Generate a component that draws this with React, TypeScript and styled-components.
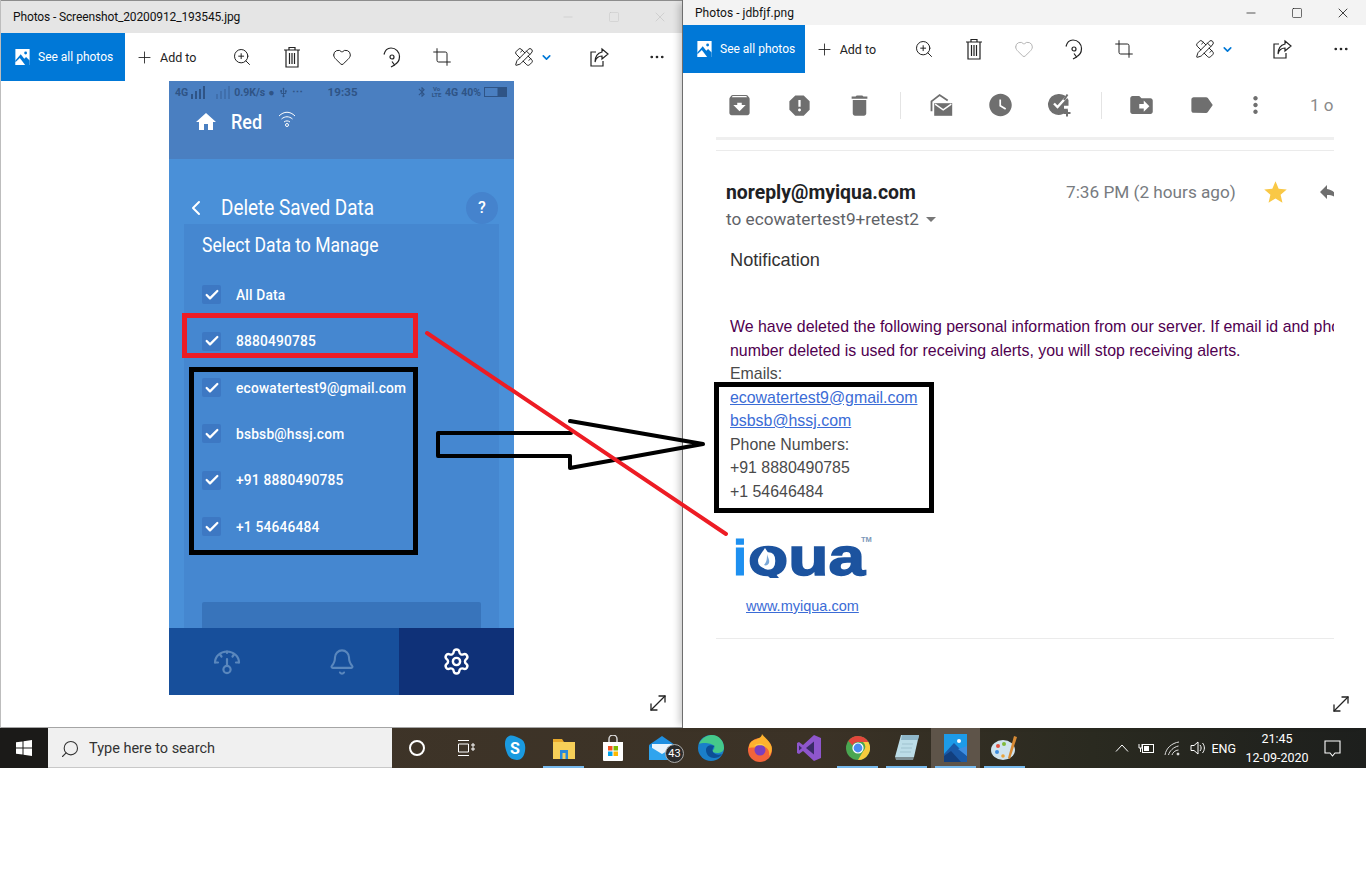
import styled, { createGlobalStyle } from "styled-components";
import type { ReactNode } from "react";
import {
  Bell,
  Check,
  ChevronDown,
  ChevronLeft,
  Crop,
  Ellipsis,
  Heart,
  Minus,
  MoveDiagonal,
  PencilRuler,
  Plus,
  Search,
  Settings,
  Square,
  X,
  ZoomIn,
} from "lucide-react";
import {
  MdArchive,
  MdArrowDropDown,
  MdBluetooth,
  MdDelete,
  MdDriveFileMove,
  MdHome,
  MdLabel,
  MdMoreVert,
  MdReply,
  MdReport,
  MdStar,
  MdUsb,
  MdWatchLater,
} from "react-icons/md";

const GlobalStyle = createGlobalStyle`
  html, body {
    margin: 0;
    background: #fff;
  }
  * {
    box-sizing: border-box;
  }
`;

const Page = styled.div`
  position: relative;
  width: 1366px;
  height: 877px;
  overflow: hidden;
  background: #fff;
  font-family: "Open Sans", "Liberation Sans", sans-serif;
`;

const Desktop = styled.div`
  display: flex;
  height: 728px;
`;

const Window = styled.section<{ $active?: boolean }>`
  height: 728px;
  display: flex;
  flex-direction: column;
  background: #fff;
  position: relative;
  border-bottom: ${(p) => (p.$active ? "none" : "1px solid #a5a5a5")};
  border-left: ${(p) => (p.$active ? "1px solid #6e6e6e" : "1px solid #bdbdbd")};
  margin-left: ${(p) => (p.$active ? "-1px" : "0")};
  width: ${(p) => (p.$active ? "684px" : "683px")};
  box-shadow: ${(p) => (p.$active ? "-6px 0 7px -3px rgba(0,0,0,.2)" : "none")};
`;

const TitleBar = styled.header<{ $active?: boolean }>`
  height: ${(p) => (p.$active ? "25px" : "33px")};
  flex: none;
  display: flex;
  align-items: center;
  background: ${(p) => (p.$active ? "#f3f3f3" : "#e5e5e5")};
  border-top: ${(p) => (p.$active ? "none" : "1px solid #8d8d8d")};
  color: #111;
  font-family: Roboto, sans-serif;
  font-size: 12px;
  padding-left: 12px;
`;

const TitleText = styled.span<{ $tight?: boolean }>`
  flex: 1;
  letter-spacing: ${(p) => (p.$tight ? "-0.13px" : "0.05px")};
`;

const WinButton = styled.span<{ $dim?: boolean }>`
  width: 46px;
  display: flex;
  justify-content: center;
  align-items: center;
  color: ${(p) => (p.$dim ? "#c4c4c4" : "#111")};
`;

const Toolbar = styled.nav`
  height: 48px;
  flex: none;
  display: flex;
  align-items: center;
  background: #fff;
`;

const SeeAll = styled.div<{ $active?: boolean }>`
  width: ${(p) => (p.$active ? "122px" : "124px")};
  height: 48px;
  background: #0078d7;
  color: #fff;
  display: flex;
  align-items: center;
  gap: 8px;
  padding-left: 14px;
  font-family: Roboto, sans-serif;
  font-size: 12px;
`;

const AddTo = styled.div<{ $active?: boolean }>`
  width: ${(p) => (p.$active ? "95px" : "92px")};
  display: flex;
  align-items: center;
  gap: 6px;
  padding-left: 10px;
  color: #222;
  font-family: Roboto, sans-serif;
  font-size: 12.5px;
`;

const ToolButton = styled.span`
  width: 50px;
  display: flex;
  justify-content: center;
  align-items: center;
  color: #222;
`;

const DrawButton = styled.span<{ $active?: boolean }>`
  width: ${(p) => (p.$active ? "76px" : "74px")};
  margin-left: 33px;
  padding-right: ${(p) => (p.$active ? "10px" : "8px")};
  display: flex;
  align-items: center;
  justify-content: center;
  gap: 6px;
  color: #222;
`;

const MoreButton = styled(ToolButton)<{ $active?: boolean }>`
  margin-left: ${(p) => (p.$active ? "9px" : "8px")};
`;

const PhotoArea = styled.div`
  flex: 1;
  padding-left: 168px;
`;

const ExpandMark = styled.span`
  position: absolute;
  right: 13px;
  bottom: 12px;
  color: #222;
  display: flex;
`;

const Phone = styled.div`
  width: 345px;
  height: 614px;
  display: flex;
  flex-direction: column;
  background: #4a90d8;
  color: #fff;
  font-family: Roboto, sans-serif;
`;

const PhoneHeader = styled.div`
  height: 78px;
  flex: none;
  background: #4a7fc1;
`;

const StatusBar = styled.div`
  height: 22px;
  display: flex;
  align-items: center;
  padding: 0 6px 0 6px;
  gap: 3px;
  color: #2f5486;
  font-size: 10.5px;
  font-weight: 700;
`;

const StatusFaded = styled.span`
  display: flex;
  margin-left: 7px;
  opacity: 0.35;
`;

const StatusTime = styled.span`
  margin-left: 22px;
  font-size: 11.5px;
  letter-spacing: 0.1px;
`;

const StatusRight = styled.span`
  margin-left: auto;
  display: flex;
  align-items: center;
  gap: 3px;
`;

const SmallStack = styled.span`
  font-size: 6px;
  line-height: 6px;
  width: 11px;
  text-align: center;
`;

const Bars = styled.svg`
  width: 15px;
  height: 13px;
  display: block;
`;

const AppRow = styled.div`
  display: flex;
  align-items: center;
  padding-left: 25px;
  height: 36px;
  margin-top: 1px;
  font-size: 20px;
  font-weight: 500;
`;

const AppName = styled.span`
  margin-left: 13px;
  transform: scaleX(0.9);
  transform-origin: left center;
`;

const WifiMark = styled.svg`
  width: 18px;
  height: 18px;
  margin: -7px 0 0 12px;
`;

const PhoneBody = styled.div`
  flex: 1;
  min-height: 0;
  display: flex;
  flex-direction: column;
  padding-top: 32px;
  overflow: hidden;
`;

const TitleRow = styled.div`
  height: 33px;
  flex: none;
  display: flex;
  align-items: center;
  padding: 0 16px 0 15px;
  font-size: 21.5px;
`;

const PageTitle = styled.span`
  flex: 1;
  margin-left: 13px;
  transform: scaleX(0.88);
  transform-origin: left center;
`;

const HelpBubble = styled.span`
  width: 32px;
  height: 32px;
  border-radius: 50%;
  background: #4583cd;
  display: flex;
  align-items: center;
  justify-content: center;
  font-size: 16px;
  font-weight: 500;
`;

const DataPanel = styled.div`
  flex: 1;
  margin: 0 15px;
  padding: 0 18px;
  background: #4587d0;
`;

const PanelHeading = styled.h2`
  margin: 0;
  height: 47.6px;
  padding-top: 9px;
  font-size: 19.5px;
  line-height: 26px;
  font-weight: 400;
  transform: scaleX(0.9);
  transform-origin: left center;
`;

const DataRow = styled.div`
  height: 46.4px;
  display: flex;
  align-items: center;
  gap: 15px;
  font-size: 14.8px;
  font-weight: 500;
`;

const DataLabel = styled.span`
  letter-spacing: 0.2px;
  transform: scaleX(0.93);
  transform-origin: left center;
  white-space: nowrap;
`;

const CheckMark = styled.span`
  width: 19px;
  height: 19px;
  flex: none;
  border-radius: 2px;
  background: #3d78c3;
  display: flex;
  align-items: center;
  justify-content: center;
`;

const SaveBlock = styled.div`
  height: 30px;
  margin-top: 52.4px;
  background: #3874bb;
  border-radius: 2px 2px 0 0;
`;

const BottomNav = styled.div`
  height: 67px;
  flex: none;
  display: grid;
  grid-template-columns: repeat(3, 1fr);
  background: #174f9b;
`;

const NavItem = styled.span<{ $on?: boolean }>`
  display: flex;
  align-items: center;
  justify-content: center;
  background: ${(p) => (p.$on ? "#0f3178" : "transparent")};
  color: ${(p) => (p.$on ? "#fff" : "#5a87bd")};
`;

const MailArea = styled.div`
  flex: 1;
  margin: 0 32px 0 33px;
  overflow: hidden;
  min-height: 0;
`;

const MailTools = styled.div`
  height: 64px;
  display: flex;
  align-items: center;
  padding-left: 10px;
  color: #6f6f6f;
  gap: 33px;
`;

const MailSep = styled.span`
  width: 1px;
  height: 27px;
  flex: none;
  background: #e4e4e4;
  margin: 0 -6.5px;
`;

const MailIcon = styled.span`
  width: 27px;
  height: 27px;
  flex: none;
  display: flex;
  align-items: center;
  justify-content: center;
`;

const MenuIcon = styled(MailIcon)`
  margin-left: -6px;
`;

const PageCount = styled.span`
  flex: none;
  margin-left: 8px;
  color: #8a8a8a;
  font-family: Roboto, sans-serif;
  font-size: 17px;
  white-space: nowrap;
`;

const Rule = styled.div<{ $thick?: boolean }>`
  height: ${(p) => (p.$thick ? "3px" : "1px")};
  margin-bottom: ${(p) => (p.$thick ? "10px" : "0")};
  background: ${(p) => (p.$thick ? "#efefef" : "#ebebeb")};
`;

const SenderRow = styled.div`
  height: 24px;
  margin: 29px 0 0 10px;
  display: flex;
  align-items: center;
  font-family: Roboto, sans-serif;
  white-space: nowrap;
`;

const Sender = styled.strong`
  width: 340px;
  flex: none;
  font-size: 19.4px;
  font-weight: 700;
  color: #202124;
`;

const SentTime = styled.span`
  width: 196px;
  flex: none;
  font-size: 17.2px;
  color: #777b80;
`;

const StarMark = styled.span`
  display: flex;
  flex: none;
  color: #f9c846;
  margin-right: 28px;
`;

const ReplyMark = styled.span`
  display: flex;
  flex: none;
  color: #6f6f6f;
`;

const ToRow = styled.div`
  height: 20px;
  margin: 5px 0 0 10px;
  display: flex;
  align-items: center;
  color: #5f6368;
  font-family: Roboto, sans-serif;
  font-size: 17.2px;
`;

const MailBody = styled.div`
  margin-left: 14px;
  font-family: "Liberation Sans", Arial, sans-serif;
  font-size: 15.9px;
  line-height: 23.5px;
  color: #4a4a4a;
`;

const Notice = styled.div`
  margin-top: 19px;
  height: 24px;
  font-size: 18.2px;
  line-height: 24px;
  color: #333;
`;

const Deleted = styled.p`
  margin: 43px 0 0;
  color: #500050;
  white-space: nowrap;
`;

const MailLink = styled.a`
  display: block;
  color: #3b6cd6;
  text-decoration: underline;
`;

const LogoBox = styled.svg`
  display: block;
  width: 145px;
  height: 46px;
  margin: 30px 0 0 1px;
`;

const SiteLink = styled.a`
  display: block;
  margin: 17px 0 0 16px;
  height: 20px;
  color: #3b6cd6;
  text-decoration: underline;
  font-size: 14.5px;
  line-height: 20px;
`;

const EndRule = styled(Rule)`
  margin-top: 22px;
`;

const Taskbar = styled.footer`
  height: 40px;
  display: flex;
  align-items: center;
  background: linear-gradient(90deg, #403529 0%, #3b3226 60%, #2a2a20 80%, #1d1f1d 100%);
  color: #fff;
`;

const StartButton = styled.span`
  width: 48px;
  height: 40px;
  flex: none;
  background: #1b1a18;
  display: flex;
  align-items: center;
  justify-content: center;
`;

const SearchBox = styled.div`
  width: 344px;
  height: 40px;
  flex: none;
  background: #f0f0f0;
  border-bottom: 1px solid #c8c8c8;
  display: flex;
  align-items: center;
  gap: 9px;
  padding: 2px 0 0 12px;
  color: #333;
  font-family: Roboto, sans-serif;
  font-size: 14.5px;
`;

const SearchGlyph = styled(Search)`
  transform: scaleX(-1);
`;

const TaskSlot = styled.span<{ $open?: boolean; $current?: boolean }>`
  width: 49px;
  height: 40px;
  flex: none;
  display: flex;
  align-items: center;
  justify-content: center;
  position: relative;
  background: ${(p) => (p.$current ? "#5e5449" : "transparent")};
  &::after {
    content: "";
    display: ${(p) => (p.$open ? "block" : "none")};
    position: absolute;
    left: 4px;
    right: 4px;
    bottom: 0;
    height: 2px;
    background: #76b9ed;
  }
`;

const TaskIcons = styled.div`
  display: flex;
`;

const Badge = styled.span`
  position: absolute;
  right: 2px;
  bottom: 5px;
  width: 19px;
  height: 19px;
  border-radius: 50%;
  border: 1px solid #aaa;
  background: #2b2b2b;
  color: #fff;
  font-family: Roboto, sans-serif;
  font-size: 11px;
  display: flex;
  align-items: center;
  justify-content: center;
`;

const Tray = styled.div`
  margin-left: auto;
  height: 40px;
  display: flex;
  align-items: center;
  gap: 9px;
  font-family: Roboto, sans-serif;
  font-size: 12.5px;
  color: #fff;
`;

const EngLabel = styled.span`
  margin-left: -4px;
`;

const Clock = styled.span`
  width: 64px;
  text-align: center;
  line-height: 19px;
  font-size: 12.5px;
  white-space: nowrap;
`;

const NotifySlot = styled.span`
  width: 46px;
  margin: 0 11px 0 -9px;
  display: flex;
  justify-content: center;
`;

const Marks = styled.svg`
  position: absolute;
  left: 0;
  top: 0;
  width: 1366px;
  height: 877px;
  pointer-events: none;
`;

const PhotosGlyph = () => (
  <svg width="15" height="16" viewBox="0 0 16 18">
    <rect width="16" height="18" fill="#fff" />
    <circle cx="11.5" cy="4.5" r="1.6" fill="#0078d7" />
    <path d="M0 13 6 6l4 5 2-2 4 4v5H0z" fill="#0078d7" />
    <path d="M0 15 5 10l6 8H0z" fill="#fff" />
  </svg>
);

const TrashGlyph = () => (
  <svg width="20" height="22" viewBox="0 0 20 22" fill="none" stroke="currentColor" strokeWidth="1.2">
    <path d="M2 4h16M7 4V1.5h6V4M4 4v17h12V4M7.5 7v11M10 7v11M12.5 7v11" />
  </svg>
);

const RotateGlyph = () => (
  <svg width="20" height="22" viewBox="0 0 20 22" fill="none" stroke="currentColor" strokeWidth="1.2">
    <path d="M2 8.5C3 4 6 2 9 2c5 0 8.5 4 8.5 8.5 0 4-2 7-5.5 8.5" />
    <path d="M10 15.5 12.5 19 9 21" />
    <circle cx="10" cy="11" r="2" />
  </svg>
);

const ShareGlyph = () => (
  <svg width="20" height="20" viewBox="0 0 20 20" fill="none" stroke="currentColor" strokeWidth="1.2">
    <path d="M7 5H2v14h12v-5" />
    <path d="M13 2l6 5-6 5V9C9 9 7 11 6 15c0-6 3-9 7-10z" />
  </svg>
);

const PhotoTools = ({ active }: { active?: boolean }) => (
  <Toolbar>
    <SeeAll $active={active}>
      <PhotosGlyph />
      <span>See all photos</span>
    </SeeAll>
    <AddTo $active={active}>
      <Plus size={19} strokeWidth={1.1} />
      <span>Add to</span>
    </AddTo>
    <ToolButton>
      <ZoomIn size={20} strokeWidth={1.2} />
    </ToolButton>
    <ToolButton>
      <TrashGlyph />
    </ToolButton>
    <ToolButton>
      <Heart size={20} strokeWidth={1.2} color={active ? "#b5b5b5" : "#222"} />
    </ToolButton>
    <ToolButton>
      <RotateGlyph />
    </ToolButton>
    <ToolButton>
      <Crop size={20} strokeWidth={1.2} />
    </ToolButton>
    <DrawButton $active={active}>
      <PencilRuler size={20} strokeWidth={1.2} />
      <ChevronDown size={13} strokeWidth={3} color="#0078d7" />
    </DrawButton>
    <ToolButton>
      <ShareGlyph />
    </ToolButton>
    <MoreButton $active={active}>
      <Ellipsis size={18} strokeWidth={1.6} />
    </MoreButton>
  </Toolbar>
);

const Row = ({ children }: { children: ReactNode }) => (
  <DataRow>
    <CheckMark>
      <Check size={16} strokeWidth={3.4} color="#fff" />
    </CheckMark>
    <DataLabel>{children}</DataLabel>
  </DataRow>
);

const SignalBars = () => (
  <Bars viewBox="0 0 15 13" fill="currentColor">
    <rect x="0" y="8" width="2" height="5" />
    <rect x="4" y="5" width="2" height="8" />
    <rect x="8" y="3" width="2" height="10" />
    <rect x="12" y="0" width="2" height="13" />
  </Bars>
);

const GaugeGlyph = () => (
  <svg width="30" height="30" viewBox="0 0 30 30" fill="none" stroke="currentColor" strokeWidth="2.2" strokeLinecap="round">
    <path d="M3 15.500A12 11 0 0 1 27 15.500" />
    <path d="M3 15.500h3M24 15.500h3M15 4.500v1.500M8 7.500l1.500 2M22 7.500l-1.500 2M15 12v7" />
    <circle cx="15" cy="22.500" r="3.600" />
  </svg>
);

const MarkUnreadGlyph = () => (
  <svg width="30" height="30" viewBox="0 0 30 30" fill="currentColor">
    <path d="M5 22V11l9-7 9 6" fill="none" stroke="currentColor" strokeWidth="2" />
    <path d="M8 13h20v14H8z" />
    <path d="M9 14l9 6.500L27 14" fill="none" stroke="#fff" strokeWidth="1.600" />
  </svg>
);

const AddTaskGlyph = () => (
  <svg width="27" height="27" viewBox="0 0 27 27" fill="currentColor">
    <path d="M11.500 2a10.500 10.500 0 1 0 9.600 14.700H17v-3h4.500V8A10.500 10.500 0 0 0 11.500 2z" />
    <path d="M7 11.500l3.500 3.500L20 4.500" fill="none" stroke="#fff" strokeWidth="2.400" />
    <path d="M20.500 2.500 17 8" stroke="currentColor" strokeWidth="2" />
    <path d="M20 17.500v7M16.500 21h7" stroke="currentColor" strokeWidth="2" fill="none" />
  </svg>
);

const WinLogo = () => (
  <svg width="16" height="16" viewBox="0 0 16 16" fill="#fff">
    <path d="M0 2.300 6.500 1.400V7.500H0zM7.500 1.300 16 0V7.500H7.500zM0 8.500H6.500V14.600L0 13.700zM7.500 8.500H16V16L7.500 14.700z" />
  </svg>
);

const TaskView = () => (
  <svg width="18" height="18" viewBox="0 0 18 18" fill="none" stroke="#fff" strokeWidth="1">
    <path d="M1 1.500h11M1 16.500h11M1.500 5h10v8h-10zM15 5h2v2h-2zM15 9h2v2h-2z" />
  </svg>
);

const SkypeIcon = () => (
  <svg width="22" height="26" viewBox="0 0 22 26">
    <path d="M5 1c3-1 6 0 10 2 5 2 7 6 6 13-1 6-4 9-8 9-5 0-8-2-10-7C0 11 0 3 5 1z" fill="#1a9ae0" />
    <text x="11" y="19" textAnchor="middle" fontFamily="Roboto" fontWeight="700" fontSize="16" fill="#fff">
      S
    </text>
  </svg>
);

const FolderIcon = () => (
  <svg width="22" height="22" viewBox="0 0 22 22">
    <path d="M0 2h9l2 3H0z" fill="#e8a92b" />
    <rect y="5" width="22" height="17" fill="#f6cf58" />
    <rect x="7" y="13" width="8" height="9" fill="#2b88d8" />
    <rect x="9.500" y="16" width="3" height="6" fill="#f6cf58" />
  </svg>
);

const StoreIcon = () => (
  <svg width="22" height="26" viewBox="0 0 22 26">
    <path d="M7 7V4a4 4 0 0 1 8 0v3" fill="none" stroke="#ddd" strokeWidth="1.400" />
    <path d="M1 7h20v18a1 1 0 0 1-1 1H2a1 1 0 0 1-1-1z" fill="#fff" />
    <rect x="6" y="11" width="4.500" height="4.500" fill="#f25022" />
    <rect x="11.500" y="11" width="4.500" height="4.500" fill="#7fba00" />
    <rect x="6" y="16.500" width="4.500" height="4.500" fill="#00a4ef" />
    <rect x="11.500" y="16.500" width="4.500" height="4.500" fill="#ffb900" />
  </svg>
);

const MailAppIcon = () => (
  <svg width="26" height="24" viewBox="0 0 26 24">
    <path d="M0 9 13 0l13 9v15H0z" fill="#1f8fe0" />
    <path d="M3 8h20v6l-10 6-10-6z" fill="#e9f4fc" />
    <path d="M0 10l13 8 13-8v14H0z" fill="#2fa4ee" />
  </svg>
);

const EdgeIcon = () => (
  <svg width="26" height="26" viewBox="0 0 26 26">
    <circle cx="13" cy="13" r="13" fill="#1a7fc9" />
    <path d="M1 9C4 2 10 0 14 0c7 0 12 6 12 13 0 3-3 5-7 5-3 0-5-1-5-3 2 0 3-2 2-4-2-3-11-4-15-2z" fill="#45c98a" />
    <path d="M8 15c0 5 4 8 8 8 3 0 6-1 8-4-3 1-6 1-8-1-2-1-2-6 1-7-5-2-9 0-9 4z" fill="#0c4f96" />
  </svg>
);

const FirefoxIcon = () => (
  <svg width="24" height="28" viewBox="0 0 24 28">
    <ellipse cx="12" cy="16" rx="12" ry="12" fill="#f2643a" />
    <path d="M1 14C1 7 6 6 9 5c3-1 5-3 5-5 2 3 6 5 9 11 2 4 0 9-2 11 1-6-2-10-9-9-4 1-8 0-11 1z" fill="#fdb22e" />
    <circle cx="12" cy="16" r="5.500" fill="#7a3fbf" />
    <path d="M6 12c3-3 8-3 11 0-3-1-8-1-11 0z" fill="#f9d24a" />
  </svg>
);

const VsIcon = () => (
  <svg width="24" height="26" viewBox="0 0 24 26">
    <path d="M17 0l7 3v20l-7 3-11-10-4 3-2-1V8l2-1 4 3z" fill="#8e56cc" />
    <path d="M17 6.500v13L9 13z" fill="#3a2b66" />
    <path d="M2 10.500v5L5 13z" fill="#3a2b66" />
  </svg>
);

const ChromeIcon = () => (
  <svg width="24" height="24" viewBox="0 0 24 24">
    <circle cx="12" cy="12" r="12" fill="#4aa651" />
    <path d="M12 0a12 12 0 0 1 10.400 6H12a6 6 0 0 0-5.500 3.500L2.300 5A12 12 0 0 1 12 0z" fill="#e2463b" />
    <path d="M22.400 6A12 12 0 0 1 12 24l5-8.500A6 6 0 0 0 17 6z" fill="#f7cb3d" />
    <circle cx="12" cy="12" r="5.600" fill="#fff" />
    <circle cx="12" cy="12" r="4.400" fill="#4a8cf0" />
  </svg>
);

const NotepadIcon = () => (
  <svg width="24" height="26" viewBox="0 0 24 26">
    <path d="M6 0h18l-5 22H0z" fill="#bcdde8" />
    <path d="M7 0h17l-1 5H6z" fill="#8fb7c9" />
    <path d="M0 22h19l-1 3H1z" fill="#7f8f94" />
    <path d="M7 9h11M6 13h11M5 17h11" stroke="#9fc2cf" />
  </svg>
);

const PhotosAppIcon = () => (
  <svg width="23" height="28" viewBox="0 0 23 28">
    <rect width="23" height="28" fill="#1d9be8" />
    <circle cx="15" cy="7" r="2" fill="#fff" />
    <path d="M0 20 10 9l13 13v6H0z" fill="#1a5aa8" />
    <path d="M0 28v-6l7-5 10 11z" fill="#123f7e" />
    <path d="M14 15l9 -3v10z" fill="#3f8ee0" />
  </svg>
);

const PaintIcon = () => (
  <svg width="28" height="28" viewBox="0 0 28 28">
    <ellipse cx="12" cy="16" rx="12" ry="10" fill="#cfe3ee" />
    <circle cx="7" cy="12" r="2" fill="#e2503f" />
    <circle cx="13" cy="10" r="2" fill="#7fba3a" />
    <circle cx="6" cy="18" r="2" fill="#3f8ee0" />
    <circle cx="12" cy="22" r="1.800" fill="#e9a33a" />
    <path d="M23 2l3 1-7 22-2-1z" fill="#d68a35" />
  </svg>
);

const IqLogo = () => (
  <LogoBox viewBox="0 0 145 46">
    <text x="2" y="42" fontFamily="Liberation Sans" fontWeight="700" fontSize="50" fill="#1e90f0" stroke="#1e90f0" strokeWidth="1.200">
      i
    </text>
    <text x="17" y="42" fontFamily="Liberation Sans" fontWeight="700" fontSize="54" fill="#1c539f" stroke="#1c539f" strokeWidth="1.500" textLength="117" lengthAdjust="spacingAndGlyphs">
      oua
    </text>
    <path d="M34 40h10l4 5h-9z" fill="#1c539f" />
    <path d="M34 15c-3 5-7 9-7 13a7 7 0 0 0 14 0c0-4-4-8-7-13z" fill="#fff" />
    <path d="M36 21c1 4 3 6 2 9-1 2-3 3-5 2 3-3 3-7 3-11z" fill="#7aa8d8" />
    <text x="130" y="9" fontFamily="Liberation Sans" fontWeight="700" fontSize="7.500" fill="#7c97b8">
      TM
    </text>
  </LogoBox>
);

const Annotations = () => (
  <Marks viewBox="0 0 1366 877" fill="none">
    <rect x="184.500" y="315.500" width="231" height="40" stroke="#ed1c24" strokeWidth="5" />
    <rect x="191.500" y="369.500" width="224" height="183" stroke="#000" strokeWidth="5" />
    <rect x="716.500" y="384.500" width="215" height="126" stroke="#000" strokeWidth="5" />
    <path
      d="M571 433H438v23H570v12L703 444 570 421"
      stroke="#000"
      strokeWidth="4"
      strokeLinejoin="round"
      strokeLinecap="round"
    />
    <path d="M427 333 726 534" stroke="#ed1c24" strokeWidth="4" strokeLinecap="round" />
  </Marks>
);

export default function App() {
  return (
    <Page>
      <GlobalStyle />
      <Desktop>
        <Window>
          <TitleBar>
            <TitleText $tight>Photos - Screenshot_20200912_193545.jpg</TitleText>
            <WinButton $dim>
              <Minus size={14} strokeWidth={1} />
            </WinButton>
            <WinButton $dim>
              <Square size={12} strokeWidth={1} />
            </WinButton>
            <WinButton $dim>
              <X size={16} strokeWidth={1} />
            </WinButton>
          </TitleBar>
          <PhotoTools />
          <PhotoArea>
            <Phone>
              <PhoneHeader>
                <StatusBar>
                  <span>4G</span>
                  <SignalBars />
                  <StatusFaded>
                    <SignalBars />
                  </StatusFaded>
                  <span>0.9K/s</span>
                  <span>●</span>
                  <MdUsb size={11} />
                  <span>⋯</span>
                  <StatusTime>19:35</StatusTime>
                  <StatusRight>
                    <MdBluetooth size={12} />
                    <SmallStack>Vo LTE</SmallStack>
                    <span>4G</span>
                    <span>40%</span>
                    <svg width="24" height="10" viewBox="0 0 24 10" fill="none" stroke="currentColor">
                      <rect x=".5" y=".5" width="22" height="9" />
                      <rect x="14" y="1" width="8" height="8" fill="currentColor" />
                    </svg>
                  </StatusRight>
                </StatusBar>
                <AppRow>
                  <MdHome size={24} />
                  <AppName>Red</AppName>
                  <WifiMark viewBox="0 0 18 18" fill="none" stroke="#fff" strokeWidth="1">
                    <path d="M1 6c5-5 11-5 16 0M3.500 9c3.500-3 7.500-3 11 0M6 12c2-1.500 4-1.500 6 0" />
                    <circle cx="9" cy="15" r="1.500" />
                  </WifiMark>
                </AppRow>
              </PhoneHeader>
              <PhoneBody>
                <TitleRow>
                  <ChevronLeft size={24} strokeWidth={2} />
                  <PageTitle>Delete Saved Data</PageTitle>
                  <HelpBubble>?</HelpBubble>
                </TitleRow>
                <DataPanel>
                  <PanelHeading>Select Data to Manage</PanelHeading>
                  <Row>All Data</Row>
                  <Row>8880490785</Row>
                  <Row>ecowatertest9@gmail.com</Row>
                  <Row>bsbsb@hssj.com</Row>
                  <Row>+91 8880490785</Row>
                  <Row>+1 54646484</Row>
                  <SaveBlock />
                </DataPanel>
              </PhoneBody>
              <BottomNav>
                <NavItem>
                  <GaugeGlyph />
                </NavItem>
                <NavItem>
                  <Bell size={28} strokeWidth={1.8} />
                </NavItem>
                <NavItem $on>
                  <Settings size={29} strokeWidth={2} />
                </NavItem>
              </BottomNav>
            </Phone>
          </PhotoArea>
          <ExpandMark>
            <MoveDiagonal size={24} strokeWidth={1.3} />
          </ExpandMark>
        </Window>

        <Window $active>
          <TitleBar $active>
            <TitleText>Photos - jdbfjf.png</TitleText>
            <WinButton>
              <Minus size={14} strokeWidth={1.2} />
            </WinButton>
            <WinButton>
              <Square size={12} strokeWidth={1.2} />
            </WinButton>
            <WinButton>
              <X size={16} strokeWidth={1.2} />
            </WinButton>
          </TitleBar>
          <PhotoTools active />
          <MailArea>
            <MailTools>
              <MailIcon>
                <MdArchive size={30} />
              </MailIcon>
              <MailIcon>
                <MdReport size={31} />
              </MailIcon>
              <MailIcon>
                <MdDelete size={31} />
              </MailIcon>
              <MailSep />
              <MailIcon>
                <MarkUnreadGlyph />
              </MailIcon>
              <MailIcon>
                <MdWatchLater size={28} />
              </MailIcon>
              <MailIcon>
                <AddTaskGlyph />
              </MailIcon>
              <MailSep />
              <MailIcon>
                <MdDriveFileMove size={30} />
              </MailIcon>
              <MailIcon>
                <MdLabel size={30} />
              </MailIcon>
              <MenuIcon>
                <MdMoreVert size={28} />
              </MenuIcon>
              <PageCount>1 o</PageCount>
            </MailTools>
            <Rule $thick />
            <Rule />
            <SenderRow>
              <Sender>noreply@myiqua.com</Sender>
              <SentTime>7:36 PM (2 hours ago)</SentTime>
              <StarMark>
                <MdStar size={27} />
              </StarMark>
              <ReplyMark>
                <MdReply size={24} />
              </ReplyMark>
            </SenderRow>
            <ToRow>
              <span>to ecowatertest9+retest2</span>
              <MdArrowDropDown size={24} color="#777" />
            </ToRow>
            <MailBody>
              <Notice>Notification</Notice>
              <Deleted>
                We have deleted the following personal information from our server. If email id and phone
                <br />
                number deleted is used for receiving alerts, you will stop receiving alerts.
              </Deleted>
              <div>Emails:</div>
              <MailLink>ecowatertest9@gmail.com</MailLink>
              <MailLink>bsbsb@hssj.com</MailLink>
              <div>Phone Numbers:</div>
              <div>+91 8880490785</div>
              <div>+1 54646484</div>
              <IqLogo />
              <SiteLink>www.myiqua.com</SiteLink>
            </MailBody>
            <EndRule />
          </MailArea>
          <ExpandMark>
            <MoveDiagonal size={24} strokeWidth={1.3} />
          </ExpandMark>
        </Window>
      </Desktop>

      <Taskbar>
        <StartButton>
          <WinLogo />
        </StartButton>
        <SearchBox>
          <SearchGlyph size={20} strokeWidth={1.3} />
          <span>Type here to search</span>
        </SearchBox>
        <TaskIcons>
          <TaskSlot>
            <svg width="18" height="18" viewBox="0 0 18 18" fill="none" stroke="#fff" strokeWidth="2">
              <circle cx="9" cy="9" r="7" />
            </svg>
          </TaskSlot>
          <TaskSlot>
            <TaskView />
          </TaskSlot>
          <TaskSlot>
            <SkypeIcon />
          </TaskSlot>
          <TaskSlot $open>
            <FolderIcon />
          </TaskSlot>
          <TaskSlot>
            <StoreIcon />
          </TaskSlot>
          <TaskSlot>
            <MailAppIcon />
            <Badge>43</Badge>
          </TaskSlot>
          <TaskSlot>
            <EdgeIcon />
          </TaskSlot>
          <TaskSlot>
            <FirefoxIcon />
          </TaskSlot>
          <TaskSlot>
            <VsIcon />
          </TaskSlot>
          <TaskSlot $open>
            <ChromeIcon />
          </TaskSlot>
          <TaskSlot $open>
            <NotepadIcon />
          </TaskSlot>
          <TaskSlot $open $current>
            <PhotosAppIcon />
          </TaskSlot>
          <TaskSlot $open>
            <PaintIcon />
          </TaskSlot>
        </TaskIcons>
        <Tray>
          <svg width="14" height="8" viewBox="0 0 14 8" fill="none" stroke="#fff">
            <path d="M1 7.500 7 1l6 6.500" />
          </svg>
          <svg width="17" height="14" viewBox="0 0 17 14" fill="none" stroke="#fff">
            <rect x="4.500" y="3.500" width="11" height="8" />
            <rect x="6" y="5" width="5" height="5" fill="#fff" stroke="none" />
            <path d="M1 3v4h3V3M2.500 7v4" />
          </svg>
          <svg width="17" height="15" viewBox="0 0 17 15" fill="none" stroke="#ddd">
            <path d="M1 14C2 7 8 2 15 1M4.500 14c1-4 5-8 10-9M8 14c.5-2 3-5 6.500-5" />
            <circle cx="14" cy="13" r="1" fill="#fff" />
          </svg>
          <svg width="16" height="16" viewBox="0 0 16 16" fill="none" stroke="#fff">
            <path d="M1 5.500h3l4-3.500v12l-4-3.500H1zM10 5c1.500 2 1.500 4 0 6M12.500 3c2.500 3 2.500 7 0 10" />
          </svg>
          <EngLabel>ENG</EngLabel>
          <Clock>
            21:45
            <br />
            12-09-2020
          </Clock>
          <NotifySlot>
            <svg width="17" height="17" viewBox="0 0 17 17" fill="none" stroke="#fff" strokeWidth="1.100">
              <path d="M1 1h15v12h-5l-2.500 3L6 13H1z" />
            </svg>
          </NotifySlot>
        </Tray>
      </Taskbar>
      <Annotations />
    </Page>
  );
}
